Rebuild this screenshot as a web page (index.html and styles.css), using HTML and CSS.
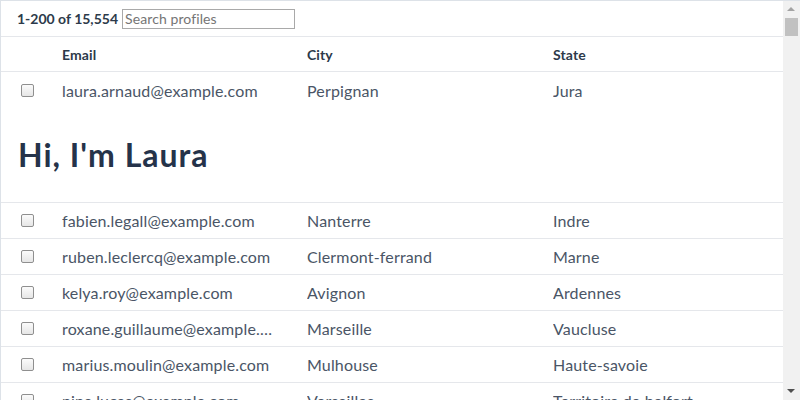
FILE: index.html
```html
<!DOCTYPE html>
<html>
<head>
<meta charset="utf-8">
<link rel="stylesheet" href="styles.css">
</head>
<body>
<div class="frame">
  <div class="main">
    <div class="toolbar">
      <span class="count">1-200 of 15,554</span>
      <input class="search" type="text" placeholder="Search profiles">
    </div>
    <div class="row head">
      <div class="cell check"></div>
      <div class="cell email">Email</div>
      <div class="cell city">City</div>
      <div class="cell state">State</div>
    </div>
    <div class="row open">
      <div class="cell check"><span class="box"></span></div>
      <div class="cell email">laura.arnaud@example.com</div>
      <div class="cell city">Perpignan</div>
      <div class="cell state">Jura</div>
    </div>
    <div class="detail">
      <h1 class="title">Hi, I'm Laura</h1>
    </div>
    <div class="row">
      <div class="cell check"><span class="box"></span></div>
      <div class="cell email">fabien.legall@example.com</div>
      <div class="cell city">Nanterre</div>
      <div class="cell state">Indre</div>
    </div>
    <div class="row">
      <div class="cell check"><span class="box"></span></div>
      <div class="cell email">ruben.leclercq@example.com</div>
      <div class="cell city">Clermont-ferrand</div>
      <div class="cell state">Marne</div>
    </div>
    <div class="row">
      <div class="cell check"><span class="box"></span></div>
      <div class="cell email">kelya.roy@example.com</div>
      <div class="cell city">Avignon</div>
      <div class="cell state">Ardennes</div>
    </div>
    <div class="row">
      <div class="cell check"><span class="box"></span></div>
      <div class="cell email">roxane.guillaume@example.com</div>
      <div class="cell city">Marseille</div>
      <div class="cell state">Vaucluse</div>
    </div>
    <div class="row">
      <div class="cell check"><span class="box"></span></div>
      <div class="cell email">marius.moulin@example.com</div>
      <div class="cell city">Mulhouse</div>
      <div class="cell state">Haute-savoie</div>
    </div>
    <div class="row">
      <div class="cell check"><span class="box"></span></div>
      <div class="cell email">nina.lucas@example.com</div>
      <div class="cell city">Versailles</div>
      <div class="cell state">Territoire de belfort</div>
    </div>
  </div>
  <div class="scrollbar">
    <div class="arrow up"></div>
    <div class="thumb"></div>
    <div class="track"></div>
    <div class="arrow down"></div>
  </div>
</div>
</body>
</html>
```
FILE: styles.css
```css
* { box-sizing: border-box; }
html, body { margin: 0; padding: 0; background: #fff; }
body {
  font-family: Lato, "Noto Sans", sans-serif;
  color: #4a5566;
  width: 800px;
  height: 400px;
  overflow: hidden;
}
.frame {
  display: flex;
  width: 800px;
  height: 400px;
  border-top: 1px solid #dde2e8;
  border-left: 1px solid #dde2e8;
}
.main {
  flex: 1;
  overflow: hidden;
  min-width: 0;
}
.toolbar {
  height: 36px;
  display: flex;
  align-items: center;
  padding-left: 16px;
  gap: 4px;
  border-bottom: 1px solid #e5e7eb;
}
.count {
  font-size: 14px;
  font-weight: 700;
  color: #2d3a4a;
}
.search {
  width: 173px;
  height: 20px;
  border: 1px solid #a9a9a9;
  padding: 0 2px;
  font-family: Lato, "Noto Sans", sans-serif;
  font-size: 14px;
  letter-spacing: 0.1px;
  color: #333;
  outline: none;
  margin: 0;
}
.search::placeholder { color: #757575; }
.row {
  display: grid;
  grid-template-columns: 61px 245px 246px 1fr;
  height: 36px;
  align-items: center;
  border-bottom: 1px solid #e5e7eb;
  font-size: 16px;
  letter-spacing: 0.15px;
}
.row.open {
  border-bottom: none;
  padding-top: 1px;
}
.row.head {
  height: 35px;
  font-size: 14px;
  letter-spacing: 0.1px;
  font-weight: 700;
  color: #2d3a4a;
}
.cell {
  white-space: nowrap;
  overflow: hidden;
  text-overflow: ellipsis;
}
.cell.email { padding-right: 34px; }
.cell.check {
  display: flex;
  padding-left: 20px;
}
.box {
  width: 13px;
  height: 13px;
  border: 1px solid #8f8f8f;
  border-radius: 2px;
  background: linear-gradient(#fbfbfb, #e6e6e6);
}
.detail {
  height: 95px;
  border-bottom: 1px solid #e5e7eb;
  padding: 28px 17px 0;
}
.title {
  margin: 0;
  font-size: 32px;
  letter-spacing: 1px;
  font-weight: 700;
  color: #25334a;
  line-height: 38px;
}
.scrollbar {
  width: 17px;
  flex: none;
  background: #f1f1f1;
  display: flex;
  flex-direction: column;
  align-items: center;
}
.arrow {
  width: 17px;
  height: 17px;
  flex: none;
  position: relative;
}
.arrow.up::after, .arrow.down::after {
  content: "";
  position: absolute;
  left: 4px;
  width: 0;
  height: 0;
  border-left: 4px solid transparent;
  border-right: 4px solid transparent;
}
.arrow.up::after { top: 6px; border-bottom: 4px solid #a3a3a3; }
.arrow.down::after { top: 6px; border-top: 4px solid #505050; }
.thumb {
  width: 13px;
  height: 18px;
  background: #c1c1c1;
  flex: none;
}
.track { flex: 1; }
```
